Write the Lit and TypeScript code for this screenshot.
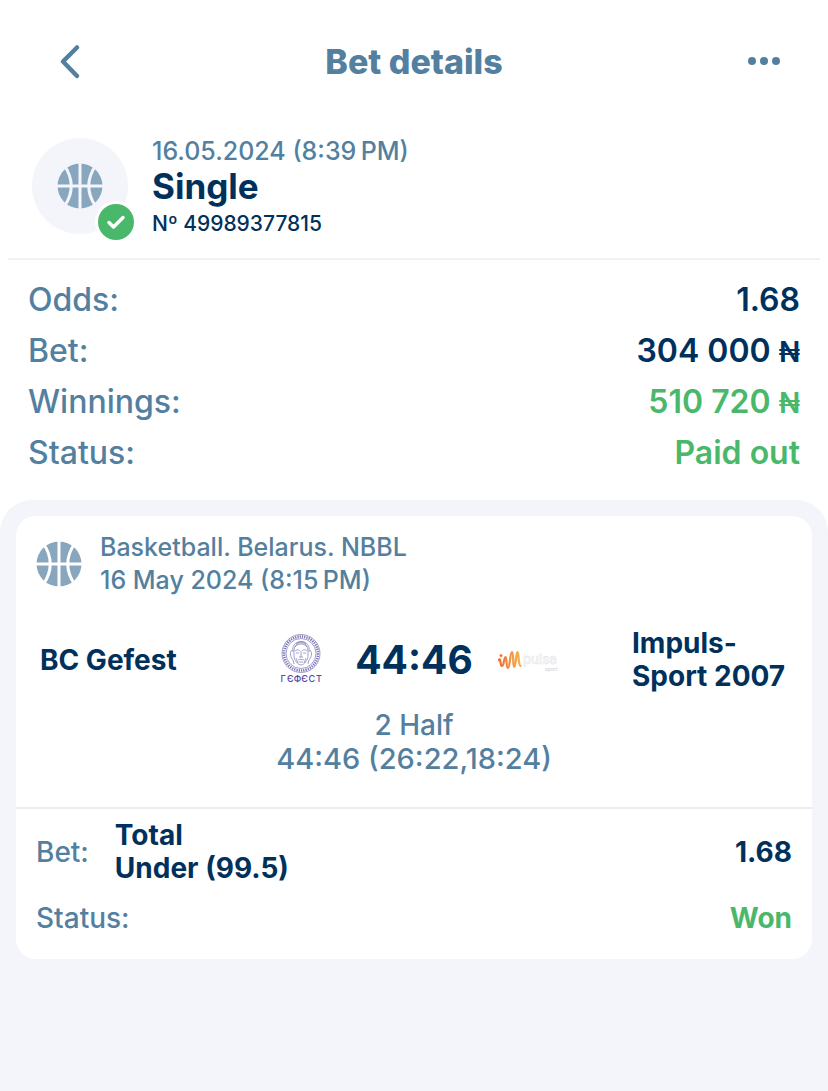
import { LitElement, html, svg, css } from "lit";
import { customElement, property } from "lit/decorators.js";

@customElement("basketball-icon")
class BasketballIcon extends LitElement {
  static styles = css`
    :host { display: block; flex: none; width: 46px; height: 46px; }
    svg { display: block; width: 100%; height: 100%; }
    .fill { fill: #88a7bf; }
    .seam { fill: none; stroke: var(--seam, #fff); stroke-width: 3; }
  `;
  render() {
    return html`<svg viewBox="0 0 46 46" aria-hidden="true">
      <circle class="fill" cx="23" cy="23" r="22.5" />
      <path class="seam" d="M23 0V46M0 23H46M7 2Q21.500 23 7 44M39 2Q24.500 23 39 44" />
    </svg>`;
  }
}

@customElement("gefest-logo")
class GefestLogo extends LitElement {
  static styles = css`
    :host { display: block; width: 60px; height: 60px; }
    svg { display: block; }
    .line { fill: none; stroke: #7a77b8; stroke-width: 0.7; }
    .ring { fill: none; stroke: #7b78b8; stroke-width: 2.6; stroke-dasharray: 1.3 1; }
    .name { fill: #514c9c; font: 500 9px Inter, sans-serif; }
  `;
  render() {
    const letters = ["Г", "Є", "Ф", "Є", "С", "Т"];
    return html`<svg width="60" height="60" viewBox="0 0 60 60" role="img" aria-label="BC Gefest">
      <circle class="line" cx="31" cy="23.500" r="19" />
      <circle class="ring" cx="31" cy="23.500" r="17" />
      <circle class="line" cx="31" cy="23.500" r="15" />
      <path class="line" transform="translate(1 0)" d="M23 21c0-11 14-11 14 0v5c0 4-4 9-7 9s-7-5-7-9zM22 22c-3-14 19-14 16 0M21 20c-3 3-1 8 1 10l1 4M39 20c3 3 1 8-1 10l-1 4M24 17c3-4 9-4 12 0M25 14c3-3 7-3 10 0M24 21c2-2 4-1 5 0M36 21c-2-2-4-1-5 0M25 23h3M32 23h3M30 21v6M28 27h4M27 30c2-1 4-1 6 0M28 32h4M25 28l2 5M35 28l-2 5" />
      ${letters.map((l, i) => svg`<text class="name" x=${13 + i * 7.2} y="52" text-anchor="middle">${l}</text>`)}
    </svg>`;
  }
}

@customElement("impuls-logo")
class ImpulsLogo extends LitElement {
  static styles = css`
    :host { display: block; width: 60px; height: 60px; }
    svg { display: block; }
    .wave { fill: none; stroke: url(#flame); stroke-width: 2.2; stroke-linecap: round; stroke-linejoin: round; }
    .name { fill: #fcfcfc; stroke: #e2e2e4; stroke-width: 0.5; font: 500 13px Inter, sans-serif; }
    .sub { fill: #d2d2d4; font: 500 5px Inter, sans-serif; }
  `;
  render() {
    return html`<svg width="60" height="60" viewBox="0 0 60 60" role="img" aria-label="Impuls-Sport 2007">
      <defs>
        <linearGradient id="flame" gradientUnits="userSpaceOnUse" x1="0" y1="0" x2="22" y2="0">
          <stop offset="0" stop-color="#ed6b36" />
          <stop offset="1" stop-color="#f6b04b" />
        </linearGradient>
      </defs>
      <path class="wave" d="M.8 30C3 27 2 36 4 36S6 27 7.500 27s.5 11 2.500 11S12 22 14 22s.5 15 2.200 15S18 22 19.500 22s.5 13 3 14" />
      <circle cx="3" cy="25.500" r="1.500" fill="#ef7b3a" />
      <text class="name" x="25" y="34">pulse</text>
      <text class="sub" x="47" y="41">sport</text>
    </svg>`;
  }
}

@customElement("summary-row")
class SummaryRow extends LitElement {
  @property() label = "";
  @property() value = "";
  @property() currency = "";
  @property({ type: Boolean }) positive = false;
  static styles = css`
    :host { display: flex; justify-content: space-between; font-size: 32px; line-height: 51px; }
    .label { color: #54809f; font-weight: 500; }
    .value { color: #00315c; font-weight: 600; }
    .positive { color: #4ab86b; }
    .currency { font-size: 28px; line-height: 1; }
  `;
  render() {
    return html`<span class="label">${this.label}:</span>
      <span class="value ${this.positive ? "positive" : ""}">${this.value}${this.currency
        ? html` <span class="currency">${this.currency}</span>`
        : ""}</span>`;
  }
}

@customElement("app-root")
class AppRoot extends LitElement {
  static styles = css`
    :host {
      display: flex; flex-direction: column; min-height: 100vh;
      background: #fff; color: #00315c;
      font-family: Inter, "Noto Sans", sans-serif;
    }
    * { box-sizing: border-box; }
    h1, h2, p { margin: 0; }
    .bar { display: flex; align-items: center; justify-content: space-between; height: 124px; padding: 0 34px; }
    .bar button { display: flex; align-items: center; justify-content: center; width: 60px; height: 48px; padding: 0; border: 0; background: none; color: #54809f; }
    .bar .back { padding-left: 14px; }
    .bar h1 { color: #54809f; font-size: 34px; line-height: 40px; font-weight: 800; }
    .ticket { display: flex; gap: 24px; margin: 0 8px; padding: 12px 24px 16px; border-bottom: 2px solid #f0f1f3; }
    .avatar { position: relative; display: flex; align-items: center; justify-content: center; width: 96px; height: 96px; margin-top: 2px; border-radius: 50%; background: #f4f5fa; --seam: #f4f5fa; }
    .badge { position: absolute; right: -10px; bottom: -10px; }
    .date { color: #54809f; font-size: 25px; line-height: 30px; font-weight: 500; }
    .kind { font-size: 35px; line-height: 40px; font-weight: 700; }
    .number { font-size: 21px; line-height: 36px; font-weight: 500; }
    .summary { padding: 14px 28px 22px; }
    .panel { flex: 1; padding: 16px; border-radius: 32px 32px 0 0; background: #f4f5fa; }
    .card { border-radius: 20px; background: #fff; }
    .event { display: flex; align-items: center; gap: 18px; padding: 15px 20px 0; color: #54809f; font-size: 25px; line-height: 33px; font-weight: 500; }
    .match { display: grid; grid-template-columns: 1fr auto 1fr; column-gap: 74px; align-items: center; margin-top: 30px; padding: 0 24px; }
    .team { font-size: 28px; line-height: 33px; font-weight: 700; white-space: nowrap; }
    .middle { display: flex; align-items: center; }
    .score { width: 168px; text-align: center; font-size: 39px; line-height: 48px; font-weight: 700; }
    .period { margin-top: 16px; padding-bottom: 32px; border-bottom: 2px solid #ececef; text-align: center; color: #54809f; font-size: 28px; line-height: 33px; font-weight: 500; }
    .scores { font-size: 29px; }
    .outcome { padding: 10px 20px 16px; font-size: 28px; line-height: 33px; }
    .row { display: flex; align-items: center; }
    .row + .row { margin-top: 8px; min-height: 50px; }
    .label { color: #54809f; font-weight: 500; }
    .pick { margin-left: 26px; font-weight: 700; }
    .result { margin-left: auto; font-weight: 700; }
    .won { color: #4ab86b; }
  `;
  render() {
    return html`
      <header class="bar">
        <button class="back" type="button" aria-label="Back">
          <svg width="24" height="36" viewBox="0 0 24 36" fill="none" stroke="currentColor" stroke-width="4.500" stroke-linecap="round" stroke-linejoin="round"><path d="M18 3.500L4 17.500l14 14.500" /></svg>
        </button>
        <h1>Bet details</h1>
        <button class="more" type="button" aria-label="More">
          <svg width="32" height="10" viewBox="0 0 32 10" fill="currentColor"><circle cx="4" cy="4" r="4" /><circle cx="16" cy="4" r="4" /><circle cx="28" cy="4" r="4" /></svg>
        </button>
      </header>
      <section class="ticket">
        <div class="avatar">
          <basketball-icon></basketball-icon>
          <svg class="badge" width="44" height="44" viewBox="0 0 44 44" aria-label="Won">
            <circle cx="22" cy="22" r="21" fill="#fff" /><circle cx="22" cy="22" r="18" fill="#4ab86b" />
            <path d="M15 22.500l4.500 4.500L29 17.500" fill="none" stroke="#fff" stroke-width="3.500" stroke-linecap="round" stroke-linejoin="round" />
          </svg>
        </div>
        <div>
          <p class="date">16.05.2024 (8:39\u202fPM)</p>
          <h2 class="kind">Single</h2>
          <p class="number">Nº 49989377815</p>
        </div>
      </section>
      <section class="summary">
        <summary-row label="Odds" value="1.68"></summary-row>
        <summary-row label="Bet" value="304 000" currency="₦"></summary-row>
        <summary-row label="Winnings" value="510 720" currency="₦" positive></summary-row>
        <summary-row label="Status" value="Paid out" positive></summary-row>
      </section>
      <main class="panel">
        <article class="card">
          <div class="event">
            <basketball-icon></basketball-icon>
            <div><p>Basketball. Belarus. NBBL</p><p>16 May 2024 (8:15\u202fPM)</p></div>
          </div>
          <div class="match">
            <p class="team">BC Gefest</p>
            <div class="middle">
              <gefest-logo></gefest-logo>
              <p class="score">44:46</p>
              <impuls-logo></impuls-logo>
            </div>
            <p class="team">Impuls-<br />Sport 2007</p>
          </div>
          <div class="period"><p>2 Half</p><p class="scores">44:46 (26:22,18:24)</p></div>
          <div class="outcome">
            <div class="row"><span class="label">Bet:</span><div class="pick"><p>Total</p><p>Under (99.5)</p></div><span class="result">1.68</span></div>
            <div class="row"><span class="label">Status:</span><span class="result won">Won</span></div>
          </div>
        </article>
      </main>
    `;
  }
}
